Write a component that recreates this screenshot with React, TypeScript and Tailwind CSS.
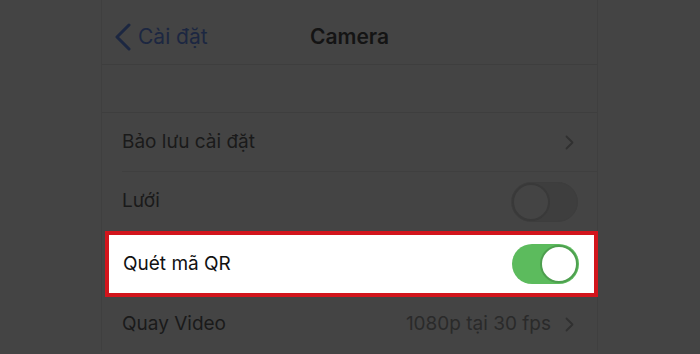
import React from 'react';

const font = { fontFamily: 'Inter, "Noto Sans", sans-serif' };

const Chevron = ({ className }: { className?: string }) => (
  <svg width="9" height="15" viewBox="0 0 9 15" className={className} fill="none">
    <path d="M1.5 1.5L7.5 7.5L1.5 13.5" stroke="currentColor" strokeWidth="1.8" strokeLinecap="round" strokeLinejoin="round" />
  </svg>
);

const Toggle = ({ on }: { on: boolean }) =>
  on ? (
    <div className="flex h-[40px] w-[67px] items-center justify-end rounded-full bg-[#5cbb5d] p-[1px]">
      <div className="h-[38px] w-[38px] rounded-full border-[2px] border-[#4e9f4f] bg-white" />
    </div>
  ) : (
    <div className="flex h-[40px] w-[67px] items-center justify-start rounded-full border border-[#3d3d3d] bg-[#3e3e3e]">
      <div className="h-[38px] w-[38px] rounded-full border-[2px] border-[#393939] bg-[#444444]" />
    </div>
  );

const App = () => {
  return (
    <div className="h-[354px] w-[700px] overflow-hidden bg-[#444444] text-[19px]" style={font}>
      <div className="ml-[101px] flex w-[497px] flex-col border-x border-[#3f3f3f]">
        <div className="relative flex h-[65px] items-center border-b border-[#3e3e3e] pt-[9px]">
          <div className="flex items-center gap-[6px] pl-[12px] text-[#1c2741]">
            <svg width="18" height="28" viewBox="0 0 18 28" fill="none">
              <path d="M15 2L3 14L15 26" stroke="currentColor" strokeWidth="3" strokeLinecap="round" strokeLinejoin="round" />
            </svg>
            <span className="text-[21px]">Cài đặt</span>
          </div>
          <span className="absolute left-1/2 -translate-x-1/2 text-[21px] font-semibold text-[#141414]">Camera</span>
        </div>

        <div className="h-[48px] border-b border-[#3e3e3e]" />

        <div className="ml-[20px] flex h-[59px] items-center justify-between border-b border-[#3f3f3f] pr-[23px] text-[#1a1a1a]">
          <span>Bảo lưu cài đặt</span>
          <Chevron className="text-[#303030]" />
        </div>

        <div className="ml-[20px] flex h-[59px] items-center justify-between pr-[19px] text-[#1a1a1a]">
          <span>Lưới</span>
          <Toggle on={false} />
        </div>

        <div className="ml-[3px] flex h-[66px] w-[493px] items-center justify-between border-[4px] border-[#d2151c] bg-white pl-[14px] pr-[15px] text-[#111111]">
          <span>Quét mã QR</span>
          <Toggle on />
        </div>

        <div className="ml-[20px] flex h-[54px] items-center justify-between pr-[23px] text-[#1a1a1a]">
          <span>Quay Video</span>
          <div className="flex items-center gap-[14px]">
            <span className="text-[#2a2a2a]">1080p tại 30 fps</span>
            <Chevron className="text-[#303030]" />
          </div>
        </div>
      </div>
    </div>
  );
};

export default App;
